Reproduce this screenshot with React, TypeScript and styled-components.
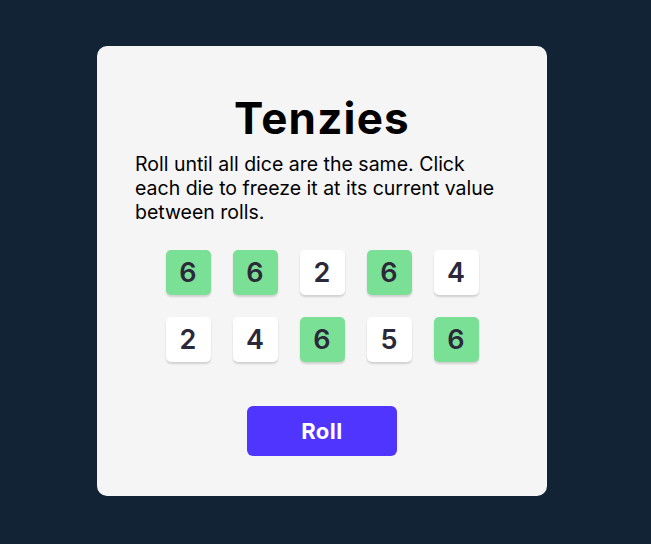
import React from "react";
import styled, { createGlobalStyle } from "styled-components";

const Global = createGlobalStyle`
  html, body { margin: 0; padding: 0; background: #112335; }
  body { font-family: Inter, "Noto Sans", sans-serif; }
`;

const Page = styled.div`
  min-height: 544px;
  box-sizing: border-box;
  padding: 46px 0 0 97px;
  background: #112335;
`;

const Card = styled.main`
  width: 450px;
  height: 450px;
  box-sizing: border-box;
  background: #f5f5f5;
  border-radius: 10px;
  display: flex;
  flex-direction: column;
  align-items: center;
  padding: 45px 38px 0;
`;

const Title = styled.h1`
  margin: 0;
  font-size: 44px;
  line-height: 54px;
  font-weight: 700;
  letter-spacing: 1.2px;
  color: #000;
`;

const Instructions = styled.p`
  margin: 7px 0 0;
  align-self: stretch;
  font-size: 19.5px;
  line-height: 24px;
  font-weight: 400;
  color: #000;
`;

const DiceGrid = styled.div`
  margin-top: 26px;
  display: grid;
  grid-template-columns: repeat(5, 45px);
  grid-auto-rows: 45px;
  gap: 22px;
`;

const Die = styled.button<{ $held: boolean }>`
  width: 45px;
  height: 45px;
  border: none;
  border-radius: 5px;
  padding: 0;
  background: ${(p) => (p.$held ? "#7ae096" : "#ffffff")};
  box-shadow: 0 2px 2px rgba(0, 0, 0, 0.15);
  font-family: Inter, "Noto Sans", sans-serif;
  font-size: 27px;
  font-weight: 600;
  color: #2b283a;
  display: flex;
  align-items: center;
  justify-content: center;
  cursor: pointer;
`;

const RollButton = styled.button`
  margin-top: 44px;
  width: 150px;
  height: 50px;
  border: none;
  border-radius: 6px;
  background: #5035ff;
  color: #fff;
  font-family: Inter, "Noto Sans", sans-serif;
  font-size: 22px;
  font-weight: 700;
  letter-spacing: 0.5px;
  cursor: pointer;
`;

const dice: { value: number; held: boolean }[] = [
  { value: 6, held: true },
  { value: 6, held: true },
  { value: 2, held: false },
  { value: 6, held: true },
  { value: 4, held: false },
  { value: 2, held: false },
  { value: 4, held: false },
  { value: 6, held: true },
  { value: 5, held: false },
  { value: 6, held: true },
];

export default function App() {
  return (
    <>
      <Global />
      <Page>
        <Card>
          <Title>Tenzies</Title>
          <Instructions>
            Roll until all dice are the same. Click each die to freeze it at its current value between rolls.
          </Instructions>
          <DiceGrid>
            {dice.map((d, i) => (
              <Die key={i} $held={d.held}>
                {d.value}
              </Die>
            ))}
          </DiceGrid>
          <RollButton>Roll</RollButton>
        </Card>
      </Page>
    </>
  );
}
